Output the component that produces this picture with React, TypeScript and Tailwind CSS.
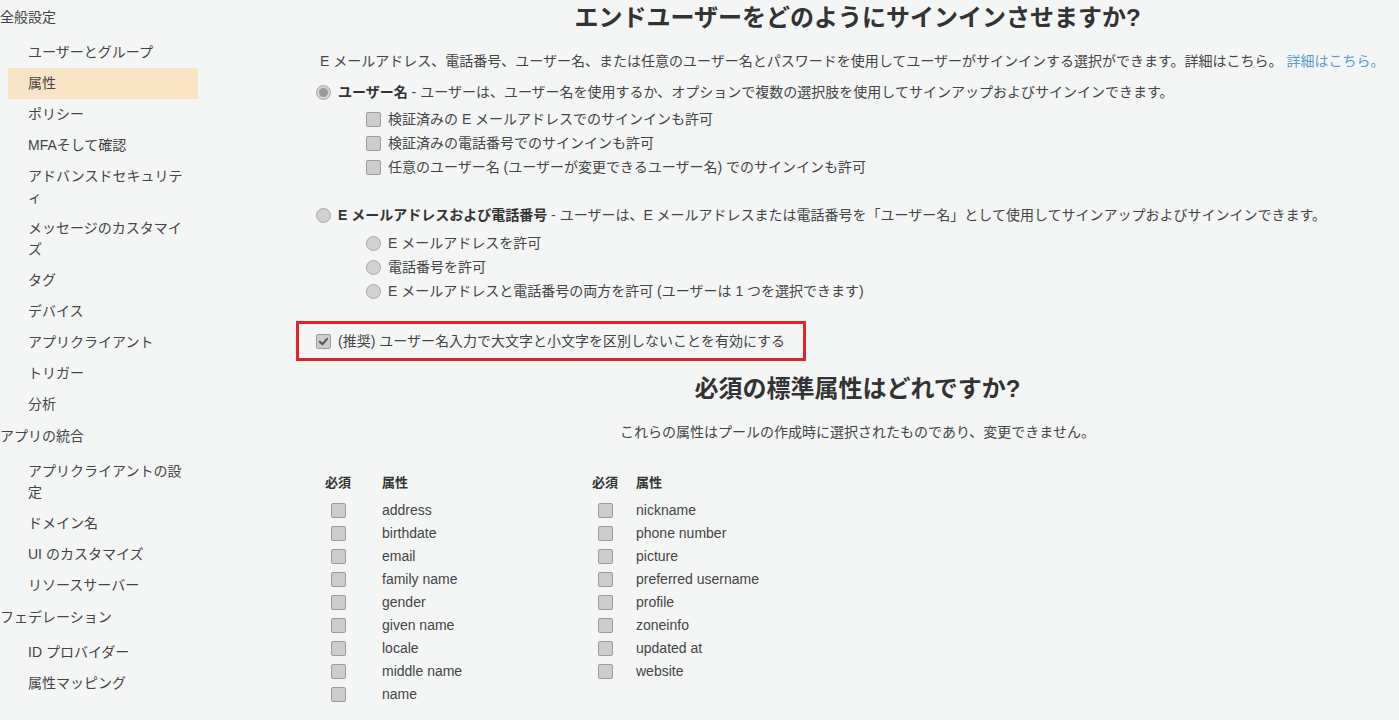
import React from 'react';

const FONT = "font-['Liberation_Sans','Noto_Sans_CJK_JP',sans-serif]";

type NavSection = { title: string; items: string[] };

const nav: NavSection[] = [
  {
    title: '全般設定',
    items: [
      'ユーザーとグループ',
      '属性',
      'ポリシー',
      'MFAそして確認',
      'アドバンスドセキュリティ',
      'メッセージのカスタマイズ',
      'タグ',
      'デバイス',
      'アプリクライアント',
      'トリガー',
      '分析',
    ],
  },
  {
    title: 'アプリの統合',
    items: ['アプリクライアントの設定', 'ドメイン名', 'UI のカスタマイズ', 'リソースサーバー'],
  },
  {
    title: 'フェデレーション',
    items: ['ID プロバイダー', '属性マッピング'],
  },
];

const leftAttrs = [
  'address',
  'birthdate',
  'email',
  'family name',
  'gender',
  'given name',
  'locale',
  'middle name',
  'name',
];

const rightAttrs = [
  'nickname',
  'phone number',
  'picture',
  'preferred username',
  'profile',
  'zoneinfo',
  'updated at',
  'website',
];

const Radio: React.FC<{ checked?: boolean }> = ({ checked }) => (
  <span className="flex h-[15px] w-[15px] shrink-0 items-center justify-center rounded-full border border-[#a8a8a8] bg-[#d2d2d2]">
    {checked && <span className="h-[9px] w-[9px] rounded-full bg-[#9a9a9a]" />}
  </span>
);

const Checkbox: React.FC<{ checked?: boolean }> = ({ checked }) => (
  <span className="flex h-[15px] w-[15px] shrink-0 items-center justify-center rounded-[2px] border border-[#9c9c9c] bg-[#cdcdcd]">
    {checked && (
      <svg viewBox="0 0 12 12" className="h-[11px] w-[11px]">
        <path d="M2 6.2 L4.8 9 L10 3.2" fill="none" stroke="#555" strokeWidth="2.2" strokeLinecap="round" strokeLinejoin="round" />
      </svg>
    )}
  </span>
);

const Sidebar: React.FC = () => (
  <div className="w-[198px] shrink-0 pt-[2px] text-[14px] text-[#444]">
    {nav.map((section, i) => (
      <div key={section.title} className={i > 0 ? 'mt-[1px]' : ''}>
        <div className="mb-[4px] py-[5px] leading-[21px]">{section.title}</div>
        {section.items.map((item) => (
          <div
            key={item}
            className={`ml-[8px] w-[190px] py-[5px] pl-[20px] pr-[10px] leading-[21px] [line-break:loose] ${
              item === '属性' ? 'bg-[#fae4c6]' : ''
            }`}
          >
            {item}
          </div>
        ))}
      </div>
    ))}
  </div>
);

const AttrColumn: React.FC<{ attrs: string[]; reqWidth: string; nameWidth: string }> = ({ attrs, reqWidth, nameWidth }) => (
  <div className="flex flex-col">
    <div className="flex h-[20px] items-center text-[13px] font-bold text-[#333]">
      <div className={reqWidth}>必須</div>
      <div className={nameWidth}>属性</div>
    </div>
    <div className="mt-[6px]">
      {attrs.map((a) => (
        <div key={a} className="flex h-[23px] items-center text-[14px] text-[#444]">
          <div className={reqWidth}>
            <div className="ml-[6px]">
              <Checkbox />
            </div>
          </div>
          <div className={nameWidth}>{a}</div>
        </div>
      ))}
    </div>
  </div>
);

export default function App() {
  return (
    <div className={`flex min-h-[720px] w-full bg-[#f4f6f6] ${FONT}`}>
      <Sidebar />
      <main className="ml-[98px] flex-1 pl-[20px] text-[14px] text-[#444]">
        <h1 className="mt-[2px] h-[32px] text-center text-[24px] font-bold leading-[32px] text-[#333]">
          エンドユーザーをどのようにサインインさせますか?
        </h1>
        <p className="mt-[17px] pl-[4px] leading-[20px]">
          E メールアドレス、電話番号、ユーザー名、または任意のユーザー名とパスワードを使用してユーザーがサインインする選択ができます。詳細はこちら。{' '}
          <span className="text-[#5b9bd6]">詳細はこちら。</span>
        </p>

        <div className="mt-[11px] flex h-[20px] items-center gap-[7px]">
          <Radio checked />
          <span>
            <b className="text-[#333]">ユーザー名</b> - ユーザーは、ユーザー名を使用するか、オプションで複数の選択肢を使用してサインアップおよびサインインできます。
          </span>
        </div>
        <div className="mt-[5px] pl-[50px]">
          {[
            '検証済みの E メールアドレスでのサインインも許可',
            '検証済みの電話番号でのサインインも許可',
            '任意のユーザー名 (ユーザーが変更できるユーザー名) でのサインインも許可',
          ].map((t) => (
            <div key={t} className="flex h-[24px] items-center gap-[7px]">
              <Checkbox />
              <span>{t}</span>
            </div>
          ))}
        </div>

        <div className="mt-[26px] flex h-[20px] items-center gap-[7px]">
          <Radio />
          <span>
            <b className="text-[#333]">E メールアドレスおよび電話番号</b> - ユーザーは、E メールアドレスまたは電話番号を「ユーザー名」として使用してサインアップおよびサインインできます。
          </span>
        </div>
        <div className="mt-[6px] pl-[50px]">
          {['E メールアドレスを許可', '電話番号を許可', 'E メールアドレスと電話番号の両方を許可 (ユーザーは 1 つを選択できます)'].map((t) => (
            <div key={t} className="flex h-[24px] items-center gap-[7px]">
              <Radio />
              <span>{t}</span>
            </div>
          ))}
        </div>

        <div className="-ml-[20px] mt-[18px] flex h-[40px] w-[510px] items-center gap-[7px] border-[3px] border-[#e8202a] pl-[17px]">
          <Checkbox checked />
          <span>(推奨) ユーザー名入力で大文字と小文字を区別しないことを有効にする</span>
        </div>

        <h2 className="mt-[12px] h-[32px] text-center text-[24px] font-bold leading-[32px] text-[#333]">
          必須の標準属性はどれですか?
        </h2>
        <p className="mt-[17px] h-[20px] text-center leading-[20px]">
          これらの属性はプールの作成時に選択されたものであり、変更できません。
        </p>

        <div className="ml-[9px] mt-[31px] flex">
          <AttrColumn attrs={leftAttrs} reqWidth="w-[57px]" nameWidth="w-[210px]" />
          <AttrColumn attrs={rightAttrs} reqWidth="w-[44px]" nameWidth="w-[200px]" />
        </div>
      </main>
    </div>
  );
}
